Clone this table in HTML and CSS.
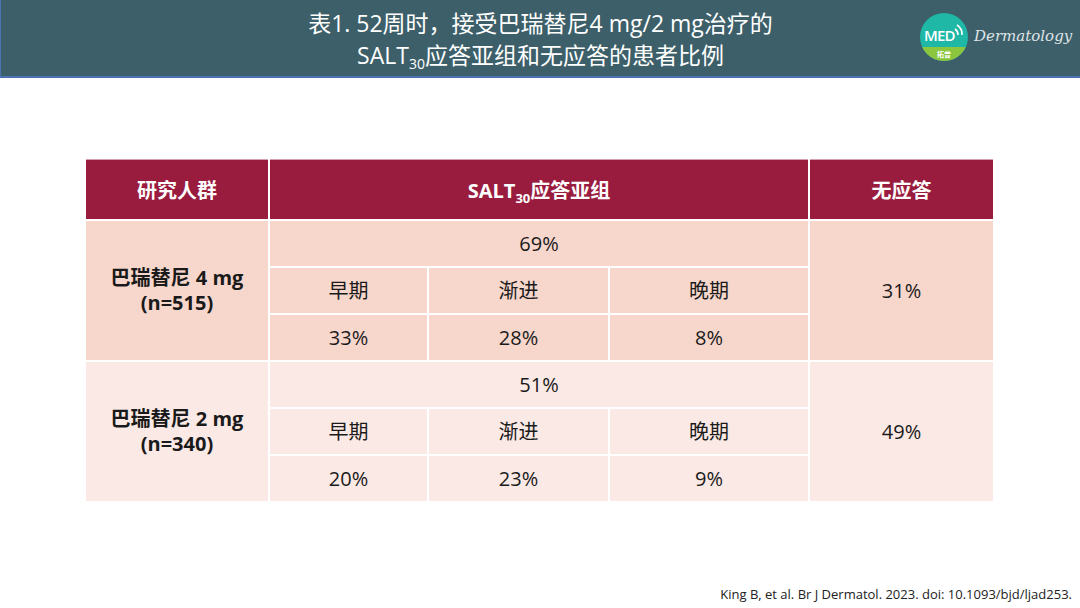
FILE: index.html
```html
<!DOCTYPE html>
<html lang="zh">
<head>
<meta charset="utf-8">
<title>SALT30</title>
<link rel="stylesheet" href="styles.css">
</head>
<body>
<div class="page">
  <header class="topbar">
    <h1 class="title">表1. 52周时，接受巴瑞替尼4 mg/2 mg治疗的<br>SALT<sub>30</sub>应答亚组和无应答的患者比例</h1>
    <div class="brand">
      <svg class="logo" width="48" height="48" viewBox="0 0 48 48">
        <defs><clipPath id="c"><circle cx="24" cy="24" r="24"/></clipPath></defs>
        <g clip-path="url(#c)">
          <rect width="48" height="48" fill="#1fb7a6"/>
          <rect y="34" width="48" height="14" fill="#8cc63f"/>
        </g>
        <text x="4" y="28" class="med">MED</text>
        <path d="M35 16 a7 7 0 0 1 3 6" fill="none" stroke="#fff" stroke-width="1.6"/>
        <path d="M37 12 a11 11 0 0 1 5 10" fill="none" stroke="#fff" stroke-width="1.6"/>
        <text x="24" y="44" class="tuo">拓普</text>
      </svg>
      <span class="derm">Dermatology</span>
    </div>
  </header>

  <table class="data">
    <colgroup>
      <col class="c1"><col class="c2"><col class="c3"><col class="c4"><col class="c5">
    </colgroup>
    <thead>
      <tr class="head">
        <th>研究人群</th>
        <th colspan="3">SALT<sub>30</sub>应答亚组</th>
        <th>无应答</th>
      </tr>
    </thead>
    <tbody class="g1">
      <tr class="r">
        <td rowspan="3" class="grp"><span class="ln">巴瑞替尼 4 mg</span><span class="ln">(n=515)</span></td>
        <td colspan="3">69%</td>
        <td rowspan="3">31%</td>
      </tr>
      <tr class="r"><td>早期</td><td>渐进</td><td>晚期</td></tr>
      <tr class="r"><td>33%</td><td>28%</td><td>8%</td></tr>
    </tbody>
    <tbody class="g2">
      <tr class="r">
        <td rowspan="3" class="grp"><span class="ln">巴瑞替尼 2 mg</span><span class="ln">(n=340)</span></td>
        <td colspan="3">51%</td>
        <td rowspan="3">49%</td>
      </tr>
      <tr class="r"><td>早期</td><td>渐进</td><td>晚期</td></tr>
      <tr class="r"><td>20%</td><td>23%</td><td>9%</td></tr>
    </tbody>
  </table>

  <footer class="cite">King B, et al. Br J Dermatol. 2023. doi: 10.1093/bjd/ljad253.</footer>
</div>
</body>
</html>
```

FILE: styles.css
```css
* { box-sizing: border-box; }
html, body { margin: 0; padding: 0; background: #fff; }
body { font-family: "Open Sans", "Noto Sans CJK SC", sans-serif; color: #1a1a1a; }
.page { width: 1080px; height: 608px; display: flex; flex-direction: column; overflow: hidden; }

.topbar {
  height: 78px;
  background: #3d5f6a;
  border-bottom: 2px solid #4a72b5;
  border-left: 1px solid #4a72b5;
  position: relative;
  display: flex;
  justify-content: center;
  align-items: center;
}
.title {
  margin: 0;
  padding-top: 1px;
  font-weight: normal;
  font-size: 23px;
  line-height: 32px;
  color: #fff;
  text-align: center;
  font-family: "Open Sans", "Noto Sans CJK SC", sans-serif;
}
.title sub { font-size: 14px; vertical-align: -5px; line-height: 0; }

.brand {
  position: absolute;
  left: 919px;
  top: 13px;
  display: flex;
  align-items: center;
  gap: 6px;
}
.logo { display: block; }
.med { font-family: "Open Sans", sans-serif; font-size: 15px; font-weight: 600; fill: #fff; letter-spacing: -0.8px; }
.tuo { font-family: "Noto Sans CJK SC", sans-serif; font-size: 7px; font-weight: bold; fill: #fff; text-anchor: middle; }
.derm {
  font-family: "DejaVu Serif", serif;
  font-style: italic;
  font-size: 15px;
  color: #dfe4e6;
  margin-top: -2px;
}

.data {
  margin: 79px 0 0 84px;
  border-collapse: separate;
  border-spacing: 2px;
  table-layout: fixed;
  width: 911px;
}
.c1 { width: 182px; }
.c2 { width: 157px; }
.c3 { width: 179px; }
.c4 { width: 198px; }
.c5 { width: 183px; }

.data th, .data td { padding: 0; text-align: center; vertical-align: middle; }
.head th {
  height: 60px;
  background: #991c3e;
  color: #fff;
  font-weight: bold;
  font-size: 20px;
  border-top: 1px solid #d7a0ae;
}
.head sub { font-size: 13px; vertical-align: -5px; line-height: 0; }
.r td { height: 45px; font-size: 20px; line-height: 24px; }
.g1 td { background: #f7d6cc; }
.g2 td { background: #fbe9e5; }
.grp { font-weight: bold; }
.ln { display: block; line-height: 26px; margin-top: -1px; }

.cite {
  margin-top: auto;
  padding: 0 8px 5px 0;
  text-align: right;
  font-size: 13px;
  color: #222;
}
```
